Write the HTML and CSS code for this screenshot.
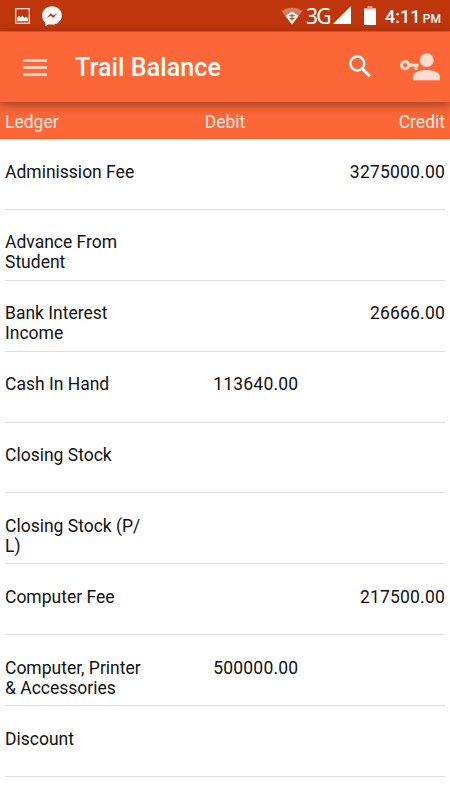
FILE: index.html
```html
<!DOCTYPE html>
<html lang="en">
<head>
  <meta charset="UTF-8" />
  <meta name="viewport" content="width=device-width, initial-scale=1.0"/>
  <title>Trail Balance</title>
  <link rel="stylesheet" href="styles.css">
</head>
<body>

  <div class="statusbar">
    <svg class="pic" width="15" height="16" viewBox="0 0 15 16">
      <rect x="0.7" y="0.7" width="13.6" height="14.6" fill="none" stroke="#fbe5df" stroke-width="1.3"/>
      <path d="M2 13.2V10L4 8L5.5 9.500L7.500 7.500L9.500 10L11 8.500L13 10.500V13.200Z" fill="#fff"/>
    </svg>
    <svg class="messenger" width="20" height="21" viewBox="0 0 20 21">
      <path d="M10 0.3C4.5 0.3 0.2 4.3 0.2 9.4C0.2 12.4 1.4 15 3.4 16.7V20.3L6.8 18.2C7.8 18.5 8.9 18.6 10 18.6C15.5 18.6 19.8 14.5 19.8 9.4C19.8 4.3 15.5 0.3 10 0.3Z" fill="#fff"/>
      <path d="M4.5 12L8.8 7.2L11.3 9.5L15.5 7.2L11.2 12L8.7 9.7Z" fill="#bf360c"/>
    </svg>
    <div class="status-right">
      <svg class="wifi" width="22" height="18" viewBox="0 0 22 18">
        <path d="M0.5 4C6.5-0.5 15.5-0.5 21.5 4L11 17.5Z" fill="#d57d62"/>
        <path d="M4.5 9L11 4.5L17.5 9L11 17.5Z" fill="#fff"/>
        <path d="M11 6.5V14M8 8.8H14M8.500 11.500H13.500" stroke="#bf360c" stroke-width="1" fill="none"/>
      </svg>
      <span class="network">3G</span>
      <svg class="signal" width="18" height="18" viewBox="0 0 18 18"><path d="M18 0V18H0Z" fill="#fff"/></svg>
      <svg class="battery" width="12" height="19" viewBox="0 0 12 19">
        <path d="M3.5 0H8.5V2H12V4H0V2H3.5Z" fill="#e2a28e"/>
        <rect y="3.5" width="12" height="15.5" fill="#fff"/>
      </svg>
      <div class="clock"><span>4:11</span><span class="ampm">PM</span></div>
    </div>
  </div>

  <div class="toolbar">
    <svg class="menu" width="24" height="17" viewBox="0 0 24 17">
      <path d="M0 1.5H24M0 8.5H24M0 15.5H24" stroke="#ffe3da" stroke-width="2.3"/>
    </svg>
    <h1>Trail Balance</h1>
    <svg class="search" width="22" height="23" viewBox="0 0 22 23">
      <circle cx="8.3" cy="8.5" r="7" fill="none" stroke="#fff" stroke-width="2.400"/>
      <path d="M13.2 13.5L20.8 21.3" stroke="#fff" stroke-width="3"/>
    </svg>
    <svg class="user" width="40" height="28" viewBox="0 0 40 28" fill="#ffddd2">
      <circle cx="26.7" cy="7.2" r="6.9"/>
      <path d="M13 27.3V23.5C13 19.2 20.5 17 26.5 17S40 19.2 40 23.5V27.3Z"/>
      <circle cx="5.2" cy="12.2" r="3.6" fill="none" stroke="#ffddd2" stroke-width="3"/>
      <path d="M9.5 10.5H18.5V13.7H17.5V17H14.5V13.7H9.5Z"/>
    </svg>
  </div>

  <div class="heading">
    <span>Ledger</span>
    <span>Debit</span>
    <span>Credit</span>
  </div>

  <div class="list">
    <div class="row"><span>Adminission Fee</span><span></span><span>3275000.00</span></div>
    <div class="row"><span>Advance From Student</span><span></span><span></span></div>
    <div class="row"><span>Bank Interest Income</span><span></span><span>26666.00</span></div>
    <div class="row"><span>Cash In Hand</span><span>113640.00</span><span></span></div>
    <div class="row"><span>Closing Stock</span><span></span><span></span></div>
    <div class="row"><span>Closing Stock (P/<wbr>L)</span><span></span><span></span></div>
    <div class="row"><span>Computer Fee</span><span></span><span>217500.00</span></div>
    <div class="row"><span>Computer, Printer &amp; Accessories</span><span>500000.00</span><span></span></div>
    <div class="row"><span>Discount</span><span></span><span></span></div>
  </div>

</body>
</html>
```

FILE: styles.css
```css
* { box-sizing: border-box; margin: 0; padding: 0; }
body {
  font-family: Roboto, sans-serif;
  background: #fff;
  color: #111;
  height: 100vh;
  overflow: hidden;
}

svg { display: block; flex: none; }

.statusbar {
  display: flex;
  align-items: flex-start;
  height: 32px;
  padding: 0 9px 0 15px;
  background: #bf360c;
  border-bottom: 1px solid #f25a2b;
  color: #fff;
}

.pic { margin-top: 8px; }
.messenger { margin: 6px 0 0 12px; }

.status-right {
  display: flex;
  margin-left: auto;
}

.wifi { margin-top: 7px; }
.network {
  width: 27px;
  margin: 4px 0 0 3px;
  font-family: "Noto Sans", sans-serif;
  font-size: 21px;
  line-height: 24px;
  letter-spacing: -1.8px;
}
.signal { margin-top: 6px; }
.battery { margin: 6px 9px 0 13px; }
.clock {
  display: flex;
  align-items: baseline;
  justify-content: space-between;
  width: 56px;
  margin-top: 5px;
  font-size: 18px;
  line-height: 24px;
  font-weight: 500;
}
.ampm { font-size: 12px; }

.toolbar {
  position: relative;
  display: flex;
  align-items: center;
  height: 70px;
  padding: 0 10px 0 23px;
  background: #fd6738;
  color: #fff;
  box-shadow: 0 3px 10px rgba(0,0,0,0.4);
}

.toolbar h1 {
  margin-left: 28px;
  font-size: 25px;
  font-weight: 500;
  letter-spacing: 0.1px;
}

.search { margin: -1px 0 0 auto; }
.user { margin-left: 29px; }

.heading {
  display: grid;
  grid-template-columns: repeat(3, 1fr);
  height: 37px;
  padding: 0 5px;
  background: #fd6738;
  border-bottom: 1px solid #fb5a20;
  color: #ffe9e2;
  font-size: 17.5px;
  line-height: 40px;
}
.heading span:nth-child(2) { text-align: center; }
.heading span:nth-child(3) { text-align: right; }

.list { padding: 0 5px; }

.row {
  display: grid;
  grid-template-columns: repeat(3, 1fr);
  height: 70.875px;
  padding-top: 22.6px;
  border-bottom: 1px solid #dedede;
  font-size: 17.5px;
  line-height: 20px;
}
.row span:not(:first-child) {
  text-align: right;
  letter-spacing: 0.2px;
}
```
